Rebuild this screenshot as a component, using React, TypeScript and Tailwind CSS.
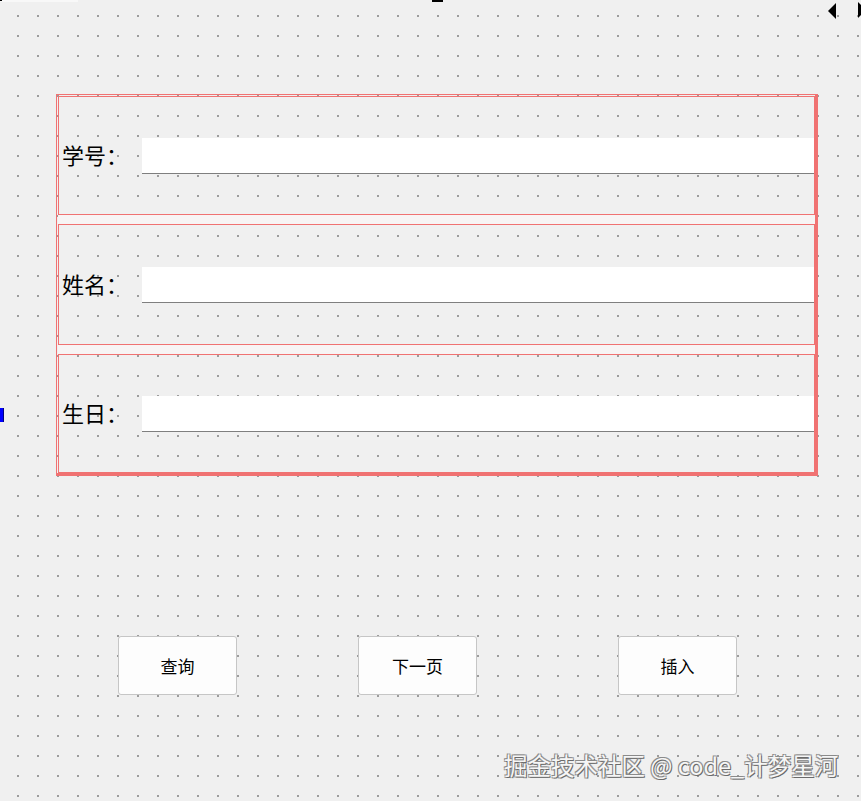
import React from 'react';

// 表单字段
const fields = [
  { label: '学号：', box: 'h-[119px]' },
  { label: '姓名：', box: 'h-[121px]' },
  { label: '生日：', box: 'h-[119px]' },
];

const FieldRow: React.FC<{ label: string; box: string }> = ({ label, box }) => (
  <div className={`ml-[1px] w-[757px] ${box} border-solid border-[1px] border-[#f07272] flex items-center`}>
    <div className="w-[81px] pl-[3px] pb-[3px] text-[22px] leading-none text-black whitespace-nowrap">{label}</div>
    <div className="ml-[2px] mt-[1px] w-[672px] h-[36px] bg-white border-b border-[#7f7f7f]" />
  </div>
);

const App: React.FC = () => {
  return (
    <div
      className="relative w-[861px] h-[801px] overflow-hidden bg-[#f0f0f0] bg-[radial-gradient(circle_at_1px_1px,#9c9c9c_1px,transparent_1.4px)] bg-[length:20px_20px] bg-[position:17px_15px]"
      style={{ fontFamily: '"Microsoft YaHei", "Noto Sans CJK SC", "Noto Sans", sans-serif' }}
    >
      {/* 顶部标记 */}
      <div className="absolute left-0 top-0 w-[78px] h-[2px] bg-[#f8f8f8]" />
      <div className="absolute left-0 top-0 w-[2px] h-[1px] bg-black" />
      <div className="absolute left-[432px] top-0 w-[11px] h-[2px] bg-black" />
      <div className="absolute left-[828px] top-[3px] w-0 h-0 border-y-[8px] border-y-transparent border-r-[8px] border-r-black" />
      <div className="absolute left-[858px] top-[2px] w-0 h-0 border-y-[8px] border-y-transparent border-l-[8px] border-l-black" />
      <div className="absolute left-0 top-[408px] w-[4px] h-[14px] bg-[#0000ff] border-r border-[#000080]" />

      {/* 布局框 */}
      <div className="ml-[56px] pt-[94px]">
        <div className="w-[762px] h-[382px] border-solid border-t-[1px] border-l-[1px] border-r-[3px] border-b-[3px] border-[#f07272] flex flex-col">
          <div className="mt-[1px]">
            <FieldRow {...fields[0]} />
          </div>
          <div className="ml-[1px] w-[757px] h-[9px] bg-[#f7f4f4]" />
          <FieldRow {...fields[1]} />
          <div className="ml-[1px] w-[757px] h-[9px] bg-[#f7f4f4]" />
          <FieldRow {...fields[2]} />
        </div>
      </div>

      {/* 按钮 */}
      <div className="flex ml-[118px] mt-[160px]">
        <button className="w-[119px] h-[59px] rounded-[3px] border border-[#c6c6c6] bg-[#fdfdfd] text-[17px] text-black">查询</button>
        <button className="ml-[121px] w-[119px] h-[59px] rounded-[3px] border border-[#c6c6c6] bg-[#fdfdfd] text-[17px] text-black">下一页</button>
        <button className="ml-[141px] w-[119px] h-[59px] rounded-[3px] border border-[#c6c6c6] bg-[#fdfdfd] text-[17px] text-black">插入</button>
      </div>

      {/* 水印 */}
      <div className="absolute left-[504px] top-[749px] text-[23.5px] leading-[32px] text-[#f6f6f6] whitespace-nowrap [text-shadow:-1px_-1px_0_#8a8a8a,1px_1px_0_#6a6a6a,1px_-1px_0_#9a9a9a,-1px_1px_0_#9a9a9a]">
        掘金技术社区 @ code_计梦星河
      </div>
    </div>
  );
};

export default App;
